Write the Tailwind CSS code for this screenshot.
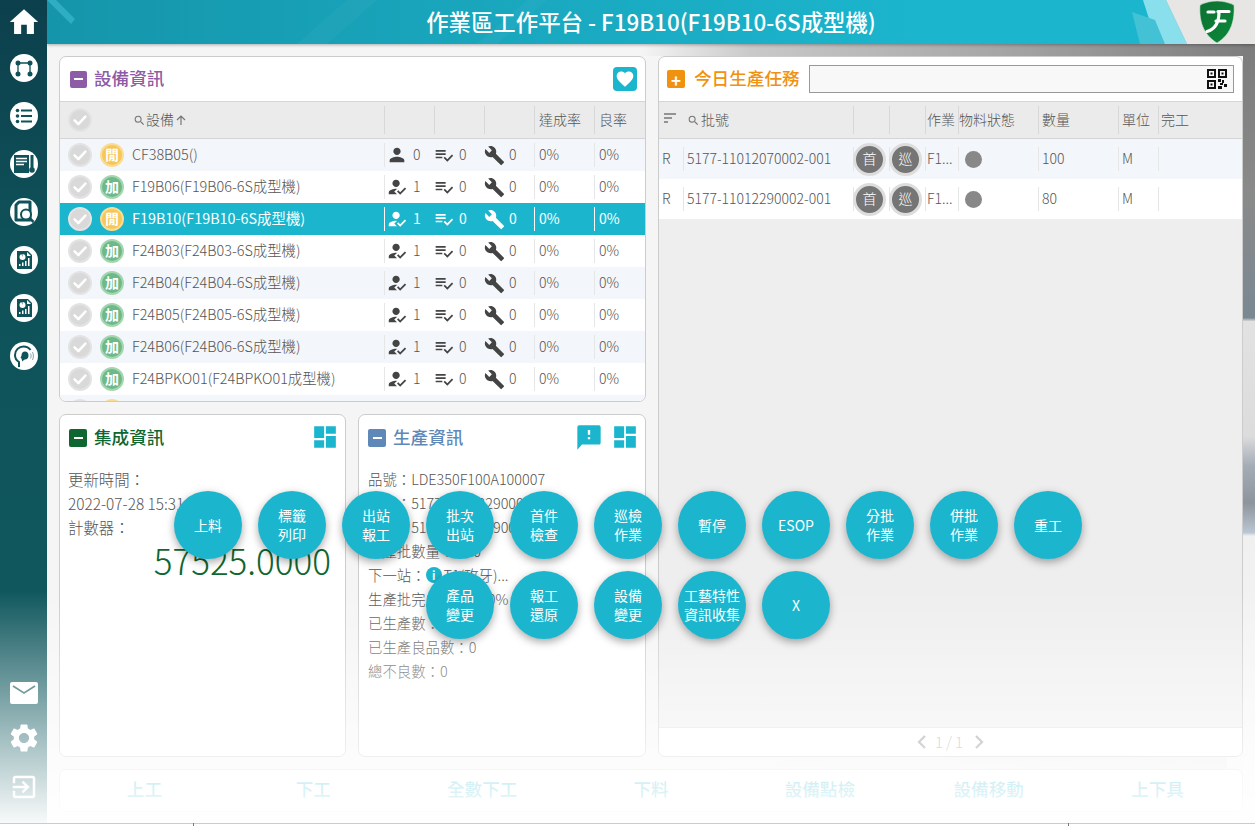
<!DOCTYPE html>
<html lang="zh-Hant"><head><meta charset="utf-8">
<script src="https://cdn.jsdelivr.net/npm/@tailwindcss/browser@4"></script>
</head>
<body class="w-[1255px] h-[826px] overflow-hidden font-['Noto_Sans_CJK_TC','Noto_Sans',sans-serif] font-light text-[#555] bg-[#f5f5f5]">
<svg class="hidden">
<symbol id="person" viewBox="0 0 24 24"><path d="M12 12c2.21 0 4-1.79 4-4s-1.79-4-4-4-4 1.79-4 4 1.79 4 4 4zm0 2c-2.67 0-8 1.34-8 4v2h16v-2c0-2.66-5.33-4-8-4z"/></symbol>
<symbol id="reg" viewBox="0 0 24 24"><path d="M9 17l3-2.94c-.39-.04-.68-.06-1-.06-2.67 0-8 1.34-8 4v2h9l-3-3zm2-5c2.21 0 4-1.79 4-4s-1.79-4-4-4-4 1.79-4 4 1.79 4 4 4zM15.47 20.5L12 17l1.4-1.41 2.07 2.08 5.13-5.17 1.4 1.41z"/></symbol>
<symbol id="plc" viewBox="0 0 24 24"><path d="M14 10H2v2h12v-2zm0-4H2v2h12V6zM2 16h8v-2H2v2zm19.5-4.5L23 13l-6.99 7-4.51-4.5L13 14l3.01 3 5.49-5.5z"/></symbol>
<symbol id="wrench" viewBox="0 0 24 24"><path d="M22.7 19l-9.1-9.1c.9-2.3.4-5-1.5-6.9-2-2-5-2.4-7.4-1.3L9 6 6 9 1.6 4.7C.4 7.1.9 10.1 2.9 12.1c1.9 1.9 4.6 2.4 6.9 1.5l9.1 9.1c.4.4 1 .4 1.4 0l2.3-2.3c.5-.4.5-1.1.1-1.4z"/></symbol>
<symbol id="dash" viewBox="0 0 24 24"><path d="M2 13h9.2V2H2v11zm0 9h9.2v-7H2v7zm10.800 0H22V11h-9.200v11zm0-20v7H22V2h-9.200z"/></symbol>
<symbol id="tick" viewBox="0 0 24 24"><path d="M5.500 12.500l4.500 4.500 8.500-9" fill="none" stroke="#fff" stroke-width="3" stroke-linecap="round" stroke-linejoin="round"/></symbol>
<symbol id="search" viewBox="0 0 24 24"><path d="M15.500 14h-.79l-.28-.27A6.470 6.470 0 0 0 16 9.500 6.500 6.500 0 1 0 9.500 16c1.610 0 3.090-.59 4.230-1.570l.27.28v.79l5 4.990L20.490 19l-4.990-5zm-6 0C7.010 14 5 11.990 5 9.500S7.010 5 9.500 5 14 7.010 14 9.500 11.990 14 9.500 14z"/></symbol>
<symbol id="chart" viewBox="0 0 24 24"><path d="M5 3h11l4 4v14H5z" fill="#0f5259"/><circle cx="10.500" cy="9" r="3" fill="#fff"/><path d="M10.500 9V6h-1z" fill="#0f5259"/><path d="M7 18v-2h1.500v2zM10 18v-3.500h1.500V18zM13 18v-5h1.500v5zM16 18v-8h1.500v8z" fill="#fff"/><path d="M15 4l4 4h-4z" fill="#fff"/></symbol>
</svg>

<div class="flex w-[1255px] h-[826px] relative">
  <!-- backdrop of the page -->
  <div class="absolute left-[640px] right-0 top-[44px] h-[12px] bg-[linear-gradient(90deg,#f5f5f5,#c9c9c9_18%,#a9a9a9_55%,#7c7c7c)]"></div>
  <div class="absolute right-0 w-[12px] top-[44px] h-[740px] bg-[linear-gradient(180deg,#7c7c7c_0%,#8a8a8a_20%,#7a8892_37%,#e2e2e2_37.500%,#dcdcdc_53%,#a4adb6_57%,#8d949c_62%,#b9c6d2_66%,#f0f0f0_66.500%,#f7f7f7_100%)]"></div>
  <div class="absolute left-[658px] right-[28px] top-[757px] h-[12px] bg-[linear-gradient(90deg,#f4f4f4,#ebebeb)]"></div>

  <!-- sidebar -->
  <aside class="relative z-10 w-[47px] shrink-0 h-full flex flex-col items-center bg-[linear-gradient(180deg,#0c3f4c,#0f5259_30%,#0f5a60)]">
    <svg class="w-[34px] h-[34px] mt-[5px]" viewBox="0 0 24 24" fill="#fff"><path d="M10 20.500v-6.500h4v6.500h5v-8.500h3L12 3 2 12h3v8.500z"/></svg>
    <div class="flex flex-col items-center gap-[20px] mt-[15px]">
      <div class="w-[28px] h-[28px] rounded-full bg-white"><svg viewBox="0 0 28 28" class="w-full h-full"><g fill="#0f5259"><circle cx="8" cy="9" r="2.500"/><circle cx="20" cy="9" r="2.500"/><circle cx="8" cy="20" r="2.500"/><circle cx="20" cy="20" r="2.500"/></g><path d="M8 9v11M20 9v11M8 9h12" fill="none" stroke="#0f5259" stroke-width="1.300"/></svg></div>
      <div class="w-[28px] h-[28px] rounded-full bg-white"><svg viewBox="0 0 28 28" class="w-full h-full"><g fill="#0f5259"><circle cx="7.500" cy="8.500" r="1.800"/><circle cx="7.500" cy="14" r="1.800"/><circle cx="7.500" cy="19.500" r="1.800"/><rect x="11" y="7.500" width="11" height="2"/><rect x="11" y="13" width="11" height="2"/><rect x="11" y="18.500" width="11" height="2"/></g></svg></div>
      <div class="w-[28px] h-[28px] rounded-full bg-white"><svg viewBox="0 0 28 28" class="w-full h-full"><rect x="4" y="5" width="15" height="18" fill="#0f5259"/><path d="M6 8.500h11M6 11.500h11M6 14.500h8" stroke="#fff" stroke-width="1.300"/><rect x="20.500" y="5" width="3" height="13" fill="#0f5259"/><circle cx="22" cy="20" r="2.800" fill="#0f5259"/></svg></div>
      <div class="w-[28px] h-[28px] rounded-full bg-white"><svg viewBox="0 0 28 28" class="w-full h-full"><path d="M9 4h11v18H6V7z" fill="none" stroke="#0f5259" stroke-width="3" stroke-linejoin="round"/><circle cx="16" cy="16.500" r="5" fill="#fff" stroke="#0f5259" stroke-width="2"/><path d="M19.500 20l4 4" stroke="#0f5259" stroke-width="2.500"/></svg></div>
      <div class="w-[28px] h-[28px] rounded-full bg-white p-[2px]"><svg class="w-full h-full"><use href="#chart"/></svg></div>
      <div class="w-[28px] h-[28px] rounded-full bg-white p-[2px]"><svg class="w-full h-full"><use href="#chart"/></svg></div>
      <div class="w-[28px] h-[28px] rounded-full bg-white"><svg viewBox="0 0 28 28" class="w-full h-full"><path d="M9 25v-5c-2.500-1.500-4-4-4-7 0-5 4-8.500 8.500-8.500 3 0 5.500 1.300 7 3.500" fill="none" stroke="#0f5259" stroke-width="2"/><path d="M12.500 19.500c-1-2-.5-3-2-4 .5-1 1-1 1-2 0-2.500 1.500-4 3.500-4s3.500 1.500 3.500 4-1.500 4-3.500 4c-1 0-1.500 .8-2.500 2z" fill="#0f5259"/><path d="M20.500 11.500c.8 1.500.8 3.500 0 5M22.500 10c1.200 2.500 1.200 5.500 0 8" stroke="#8aa5a9" stroke-width="1" fill="none"/></svg></div>
    </div>
    <div class="mt-auto flex flex-col items-center gap-[20px] mb-[24px]">
      <svg class="w-[28px] h-[22px]" viewBox="0 0 28 22"><rect width="28" height="22" rx="2" fill="#fff"/><path d="M3 4l11 7 11-7" fill="none" stroke="#0f5259" stroke-width="1.500"/></svg>
      <svg class="w-[34px] h-[34px] -my-[3px]" viewBox="0 0 24 24" fill="#fff"><path d="M19.140,12.940c0.040-0.300,0.060-0.610,0.060-0.940c0-0.320-0.020-0.640-0.070-0.940l2.030-1.580c0.180-0.140,0.230-0.410,0.120-0.610l-1.920-3.320c-0.120-0.220-0.370-0.290-0.590-0.220l-2.390,0.960c-0.500-0.380-1.030-0.700-1.620-0.940L14.400,2.810c-0.040-0.240-0.240-0.410-0.480-0.410h-3.840c-0.240,0-0.430,0.170-0.470,0.410L9.250,5.350C8.660,5.590,8.120,5.920,7.630,6.290L5.240,5.330c-0.220-0.080-0.470,0-0.590,0.220L2.740,8.870C2.620,9.080,2.660,9.340,2.860,9.480l2.030,1.580C4.840,11.360,4.800,11.690,4.800,12s0.020,0.640,0.070,0.940l-2.030,1.580c-0.180,0.140-0.230,0.410-0.120,0.610l1.920,3.320c0.120,0.220,0.370,0.290,0.590,0.220l2.390-0.960c0.500,0.380,1.030,0.700,1.620,0.940l0.360,2.540c0.050,0.240,0.240,0.410,0.480,0.410h3.840c0.240,0,0.440-0.170,0.470-0.410l0.360-2.540c0.590-0.240,1.130-0.560,1.620-0.940l2.390,0.960c0.220,0.080,0.470,0,0.590-0.220l1.920-3.320c0.120-0.220,0.070-0.470-0.120-0.610L19.140,12.940z M12,15.600c-1.980,0-3.600-1.620-3.600-3.600s1.620-3.600,3.600-3.600s3.600,1.620,3.600,3.600S13.980,15.600,12,15.600z"/></svg>
      <svg class="w-[30px] h-[30px]" viewBox="0 0 24 24" fill="#fff"><path d="M10.090 15.590L11.500 17l5-5-5-5-1.410 1.410L12.670 11H3v2h9.670l-2.580 2.590zM19 3H5c-1.110 0-2 .9-2 2v4h2V5h14v14H5v-4H3v4c0 1.100.89 2 2 2h14c1.100 0 2-.9 2-2V5c0-1.100-.9-2-2-2z"/></svg>
    </div>
  </aside>

  <div class="relative w-[1208px] h-full flex flex-col">
    <!-- header -->
    <header class="relative h-[44px] shrink-0 overflow-hidden flex items-center justify-center bg-[linear-gradient(90deg,#1595aa,#19a6bd_35%,#1bb6ce_75%,#1bb6ce)] shadow-[0_1px_3px_rgba(0,0,0,0.3)]">
      <svg class="absolute inset-0 w-[1208px] h-[44px]" viewBox="0 0 1208 44">
        <polygon points="0,0 9,0 28,19 24,24" fill="#45c3d6" opacity="0.55"/>
        <polygon points="300,0 330,0 280,44 250,44" fill="#fff" opacity="0.03"/>
        <polygon points="480,0 500,0 450,44 430,44" fill="#fff" opacity="0.03"/>
        <polygon points="1096,0 1119,0 1140,44 1110,44" fill="#8adfec"/>
        <polygon points="1085,12 1108,20 1118,44 1093,44" fill="#43c2d6"/>
        <polygon points="1119,0 1208,0 1208,44 1140,44" fill="#e8e6e4"/>
      </svg>
      <h1 class="relative text-white text-[22.400px] leading-none font-medium pb-[1px]">作業區工作平台 - F19B10(F19B10-6S成型機)</h1>
      <svg class="absolute right-[19px] top-0 w-[38px] h-[44px]" viewBox="0 0 38 44"><defs><linearGradient id="lg" x1="0" x2="1" y1="0" y2="1"><stop offset="0" stop-color="#0d6f30"/><stop offset="1" stop-color="#0b8a3a"/></linearGradient></defs><path d="M19 1c6 0 12 1.500 17 4 .8 14-2 29-17 38C4 34 1 19 2 5c5-2.500 11-4 17-4z" fill="url(#lg)" stroke="#d5ead9" stroke-width="0.600"/><path d="M10 12h6M20 11.500h11M21 12c0 9-3 17-12 19.500M18 21h9" stroke="#fff" stroke-width="3.200" fill="none" stroke-linecap="round"/></svg>
    </header>

    <!-- content -->
    <main class="flex-1 flex flex-col pt-[12px] px-[12px] gap-[12px]">
      <div class="flex gap-[12px] h-[701px]">
        <div class="w-[587px] flex flex-col gap-[12px]">

          <!-- equipment -->
          <section class="h-[346px] overflow-hidden bg-white border border-[#ccc] rounded-[7px]">
            <div class="h-[44px] flex items-center justify-between pl-[10px] pr-[8px]">
              <div class="flex items-center gap-[7px]"><span class="w-[17px] h-[17px] rounded-[2px] bg-[#8e5ba6] flex items-center justify-center"><span class="w-[9px] h-[2px] bg-white"></span></span><span class="text-[17.600px] font-medium text-[#8e5ba6] leading-none -mt-[2px]">設備資訊</span></div>
              <span class="w-[24px] h-[24px] rounded-[4px] bg-[#1bb6ce] flex items-center justify-center"><svg class="w-[20px] h-[20px]" viewBox="0 0 24 24" fill="#fff"><path d="M12 21.350l-1.450-1.320C5.400 15.360 2 12.280 2 8.500 2 5.420 4.420 3 7.500 3c1.740 0 3.410.81 4.500 2.090C13.090 3.810 14.760 3 16.500 3 19.580 3 22 5.420 22 8.500c0 3.780-3.400 6.860-8.550 11.540L12 21.350z"/></svg></span>
            </div>
            <div class="h-[38px] flex items-center bg-[#ebebeb] border-y border-[#d5d5d5] text-[14px]">
              <div class="w-[324px] flex items-center">
                <span class="ml-[8px] w-[24px] h-[24px] rounded-full bg-[#d9d9d9] border-2 border-[#e3e3e3]"><svg class="w-full h-full"><use href="#tick"/></svg></span>
                <svg class="w-[13px] h-[13px] ml-[41px] fill-[#777]"><use href="#search"/></svg><span class="-mt-[2px]">設備</span>
                <svg class="w-[12px] h-[12px] ml-[1px]" viewBox="0 0 12 12"><path d="M6 11V2M2 6l4-4 4 4" fill="none" stroke="#777" stroke-width="1.200"/></svg>
              </div>
              <div class="w-[50px] h-[28px] border-l border-[#d8d8d8]"></div>
              <div class="w-[50px] h-[28px] border-l border-[#d8d8d8]"></div>
              <div class="w-[50px] h-[28px] border-l border-[#d8d8d8]"></div>
              <div class="w-[60px] h-[28px] border-l border-[#d8d8d8] pl-[4px] leading-[26px]">達成率</div>
              <div class="w-[51px] h-[28px] border-l border-[#d8d8d8] pl-[4px] leading-[26px]">良率</div>
            </div>

            <div class="h-[32px] flex items-center text-[14px] bg-[#f3f6fa]">
              <div class="w-[324px] flex items-center"><span class="ml-[8px] w-[24px] h-[24px] rounded-full bg-[#d9d9d9] border-2 border-[#e3e3e3]"><svg class="w-full h-full"><use href="#tick"/></svg></span><span class="ml-[8px] w-[24px] h-[24px] rounded-full bg-[#f5c75a] border-2 border-[#fbdc94] text-white font-bold text-[14px] leading-[19px] text-center">閒</span><span class="ml-[8px] -mt-[2px] text-[14.400px]">CF38B05()</span></div>
              <div class="w-[50px] h-[24px] border-l border-[#e6e6e6] flex items-center pl-[1px] gap-[5px]"><svg class="w-[22px] h-[22px] fill-[#444]"><use href="#person"/></svg><span class="-mt-[2px]">0</span></div>
              <div class="w-[50px] h-[24px] flex items-center gap-[5px]"><svg class="w-[20px] h-[20px] fill-[#444]"><use href="#plc"/></svg><span class="-mt-[2px]">0</span></div>
              <div class="w-[50px] h-[24px] flex items-center gap-[4px]"><svg class="w-[21px] h-[21px] fill-[#444]"><use href="#wrench"/></svg><span class="-mt-[2px]">0</span></div>
              <div class="w-[60px] h-[24px] border-l border-[#e6e6e6] pl-[4px] leading-[22px]">0%</div>
              <div class="w-[51px] h-[24px] border-l border-[#e6e6e6] pl-[4px] leading-[22px]">0%</div>
            </div>
            <div class="h-[32px] flex items-center text-[14px] bg-white">
              <div class="w-[324px] flex items-center"><span class="ml-[8px] w-[24px] h-[24px] rounded-full bg-[#d9d9d9] border-2 border-[#e3e3e3]"><svg class="w-full h-full"><use href="#tick"/></svg></span><span class="ml-[8px] w-[24px] h-[24px] rounded-full bg-[#6fb986] border-2 border-[#a3d6b2] text-white font-bold text-[14px] leading-[19px] text-center">加</span><span class="ml-[8px] -mt-[2px] text-[14.400px]">F19B06(F19B06-6S成型機)</span></div>
              <div class="w-[50px] h-[24px] border-l border-[#e6e6e6] flex items-center pl-[1px] gap-[5px]"><svg class="w-[22px] h-[22px] fill-[#444]"><use href="#reg"/></svg><span class="-mt-[2px]">1</span></div>
              <div class="w-[50px] h-[24px] flex items-center gap-[5px]"><svg class="w-[20px] h-[20px] fill-[#444]"><use href="#plc"/></svg><span class="-mt-[2px]">0</span></div>
              <div class="w-[50px] h-[24px] flex items-center gap-[4px]"><svg class="w-[21px] h-[21px] fill-[#444]"><use href="#wrench"/></svg><span class="-mt-[2px]">0</span></div>
              <div class="w-[60px] h-[24px] border-l border-[#e6e6e6] pl-[4px] leading-[22px]">0%</div>
              <div class="w-[51px] h-[24px] border-l border-[#e6e6e6] pl-[4px] leading-[22px]">0%</div>
            </div>
            <div class="h-[32px] flex items-center text-[14px] bg-[#1bb6ce] text-white font-normal">
              <div class="w-[324px] flex items-center"><span class="ml-[8px] w-[24px] h-[24px] rounded-full bg-[#d9d9d9] border-2 border-[#e3e3e3]"><svg class="w-full h-full"><use href="#tick"/></svg></span><span class="ml-[8px] w-[24px] h-[24px] rounded-full bg-[#f5c75a] border-2 border-[#fbdc94] text-white font-bold text-[14px] leading-[19px] text-center">閒</span><span class="ml-[8px] -mt-[2px] text-[14.400px]">F19B10(F19B10-6S成型機)</span></div>
              <div class="w-[50px] h-[24px] border-l border-white flex items-center pl-[1px] gap-[5px]"><svg class="w-[22px] h-[22px] fill-white"><use href="#reg"/></svg><span class="-mt-[2px]">1</span></div>
              <div class="w-[50px] h-[24px] flex items-center gap-[5px]"><svg class="w-[20px] h-[20px] fill-white"><use href="#plc"/></svg><span class="-mt-[2px]">0</span></div>
              <div class="w-[50px] h-[24px] flex items-center gap-[4px]"><svg class="w-[21px] h-[21px] fill-white"><use href="#wrench"/></svg><span class="-mt-[2px]">0</span></div>
              <div class="w-[60px] h-[24px] border-l border-white pl-[4px] leading-[22px]">0%</div>
              <div class="w-[51px] h-[24px] border-l border-white pl-[4px] leading-[22px]">0%</div>
            </div>
            <div class="h-[32px] flex items-center text-[14px] bg-white">
              <div class="w-[324px] flex items-center"><span class="ml-[8px] w-[24px] h-[24px] rounded-full bg-[#d9d9d9] border-2 border-[#e3e3e3]"><svg class="w-full h-full"><use href="#tick"/></svg></span><span class="ml-[8px] w-[24px] h-[24px] rounded-full bg-[#6fb986] border-2 border-[#a3d6b2] text-white font-bold text-[14px] leading-[19px] text-center">加</span><span class="ml-[8px] -mt-[2px] text-[14.400px]">F24B03(F24B03-6S成型機)</span></div>
              <div class="w-[50px] h-[24px] border-l border-[#e6e6e6] flex items-center pl-[1px] gap-[5px]"><svg class="w-[22px] h-[22px] fill-[#444]"><use href="#reg"/></svg><span class="-mt-[2px]">1</span></div>
              <div class="w-[50px] h-[24px] flex items-center gap-[5px]"><svg class="w-[20px] h-[20px] fill-[#444]"><use href="#plc"/></svg><span class="-mt-[2px]">0</span></div>
              <div class="w-[50px] h-[24px] flex items-center gap-[4px]"><svg class="w-[21px] h-[21px] fill-[#444]"><use href="#wrench"/></svg><span class="-mt-[2px]">0</span></div>
              <div class="w-[60px] h-[24px] border-l border-[#e6e6e6] pl-[4px] leading-[22px]">0%</div>
              <div class="w-[51px] h-[24px] border-l border-[#e6e6e6] pl-[4px] leading-[22px]">0%</div>
            </div>
            <div class="h-[32px] flex items-center text-[14px] bg-[#f3f6fa]">
              <div class="w-[324px] flex items-center"><span class="ml-[8px] w-[24px] h-[24px] rounded-full bg-[#d9d9d9] border-2 border-[#e3e3e3]"><svg class="w-full h-full"><use href="#tick"/></svg></span><span class="ml-[8px] w-[24px] h-[24px] rounded-full bg-[#6fb986] border-2 border-[#a3d6b2] text-white font-bold text-[14px] leading-[19px] text-center">加</span><span class="ml-[8px] -mt-[2px] text-[14.400px]">F24B04(F24B04-6S成型機)</span></div>
              <div class="w-[50px] h-[24px] border-l border-[#e6e6e6] flex items-center pl-[1px] gap-[5px]"><svg class="w-[22px] h-[22px] fill-[#444]"><use href="#reg"/></svg><span class="-mt-[2px]">1</span></div>
              <div class="w-[50px] h-[24px] flex items-center gap-[5px]"><svg class="w-[20px] h-[20px] fill-[#444]"><use href="#plc"/></svg><span class="-mt-[2px]">0</span></div>
              <div class="w-[50px] h-[24px] flex items-center gap-[4px]"><svg class="w-[21px] h-[21px] fill-[#444]"><use href="#wrench"/></svg><span class="-mt-[2px]">0</span></div>
              <div class="w-[60px] h-[24px] border-l border-[#e6e6e6] pl-[4px] leading-[22px]">0%</div>
              <div class="w-[51px] h-[24px] border-l border-[#e6e6e6] pl-[4px] leading-[22px]">0%</div>
            </div>
            <div class="h-[32px] flex items-center text-[14px] bg-white">
              <div class="w-[324px] flex items-center"><span class="ml-[8px] w-[24px] h-[24px] rounded-full bg-[#d9d9d9] border-2 border-[#e3e3e3]"><svg class="w-full h-full"><use href="#tick"/></svg></span><span class="ml-[8px] w-[24px] h-[24px] rounded-full bg-[#6fb986] border-2 border-[#a3d6b2] text-white font-bold text-[14px] leading-[19px] text-center">加</span><span class="ml-[8px] -mt-[2px] text-[14.400px]">F24B05(F24B05-6S成型機)</span></div>
              <div class="w-[50px] h-[24px] border-l border-[#e6e6e6] flex items-center pl-[1px] gap-[5px]"><svg class="w-[22px] h-[22px] fill-[#444]"><use href="#reg"/></svg><span class="-mt-[2px]">1</span></div>
              <div class="w-[50px] h-[24px] flex items-center gap-[5px]"><svg class="w-[20px] h-[20px] fill-[#444]"><use href="#plc"/></svg><span class="-mt-[2px]">0</span></div>
              <div class="w-[50px] h-[24px] flex items-center gap-[4px]"><svg class="w-[21px] h-[21px] fill-[#444]"><use href="#wrench"/></svg><span class="-mt-[2px]">0</span></div>
              <div class="w-[60px] h-[24px] border-l border-[#e6e6e6] pl-[4px] leading-[22px]">0%</div>
              <div class="w-[51px] h-[24px] border-l border-[#e6e6e6] pl-[4px] leading-[22px]">0%</div>
            </div>
            <div class="h-[32px] flex items-center text-[14px] bg-[#f3f6fa]">
              <div class="w-[324px] flex items-center"><span class="ml-[8px] w-[24px] h-[24px] rounded-full bg-[#d9d9d9] border-2 border-[#e3e3e3]"><svg class="w-full h-full"><use href="#tick"/></svg></span><span class="ml-[8px] w-[24px] h-[24px] rounded-full bg-[#6fb986] border-2 border-[#a3d6b2] text-white font-bold text-[14px] leading-[19px] text-center">加</span><span class="ml-[8px] -mt-[2px] text-[14.400px]">F24B06(F24B06-6S成型機)</span></div>
              <div class="w-[50px] h-[24px] border-l border-[#e6e6e6] flex items-center pl-[1px] gap-[5px]"><svg class="w-[22px] h-[22px] fill-[#444]"><use href="#reg"/></svg><span class="-mt-[2px]">1</span></div>
              <div class="w-[50px] h-[24px] flex items-center gap-[5px]"><svg class="w-[20px] h-[20px] fill-[#444]"><use href="#plc"/></svg><span class="-mt-[2px]">0</span></div>
              <div class="w-[50px] h-[24px] flex items-center gap-[4px]"><svg class="w-[21px] h-[21px] fill-[#444]"><use href="#wrench"/></svg><span class="-mt-[2px]">0</span></div>
              <div class="w-[60px] h-[24px] border-l border-[#e6e6e6] pl-[4px] leading-[22px]">0%</div>
              <div class="w-[51px] h-[24px] border-l border-[#e6e6e6] pl-[4px] leading-[22px]">0%</div>
            </div>
            <div class="h-[32px] flex items-center text-[14px] bg-white">
              <div class="w-[324px] flex items-center"><span class="ml-[8px] w-[24px] h-[24px] rounded-full bg-[#d9d9d9] border-2 border-[#e3e3e3]"><svg class="w-full h-full"><use href="#tick"/></svg></span><span class="ml-[8px] w-[24px] h-[24px] rounded-full bg-[#6fb986] border-2 border-[#a3d6b2] text-white font-bold text-[14px] leading-[19px] text-center">加</span><span class="ml-[8px] -mt-[2px] text-[14.400px]">F24BPKO01(F24BPKO01成型機)</span></div>
              <div class="w-[50px] h-[24px] border-l border-[#e6e6e6] flex items-center pl-[1px] gap-[5px]"><svg class="w-[22px] h-[22px] fill-[#444]"><use href="#reg"/></svg><span class="-mt-[2px]">1</span></div>
              <div class="w-[50px] h-[24px] flex items-center gap-[5px]"><svg class="w-[20px] h-[20px] fill-[#444]"><use href="#plc"/></svg><span class="-mt-[2px]">0</span></div>
              <div class="w-[50px] h-[24px] flex items-center gap-[4px]"><svg class="w-[21px] h-[21px] fill-[#444]"><use href="#wrench"/></svg><span class="-mt-[2px]">0</span></div>
              <div class="w-[60px] h-[24px] border-l border-[#e6e6e6] pl-[4px] leading-[22px]">0%</div>
              <div class="w-[51px] h-[24px] border-l border-[#e6e6e6] pl-[4px] leading-[22px]">0%</div>
            </div>
            <div class="h-[32px] flex items-center bg-[#f3f6fa]"><span class="ml-[8px] w-[24px] h-[24px] rounded-full bg-[#d9d9d9] border-2 border-[#e3e3e3]"></span><span class="ml-[8px] w-[24px] h-[24px] rounded-full bg-[#f5c75a] border-2 border-[#fbdc94]"></span></div>
          </section>

          <div class="flex gap-[12px] h-[343px]">
            <!-- integration -->
            <section class="w-[287px] bg-white border border-[#ccc] rounded-[7px] px-[9px]">
              <div class="h-[45px] flex items-center justify-between">
                <div class="flex items-center gap-[7px]"><span class="w-[18px] h-[18px] rounded-[2px] bg-[#0f6630] flex items-center justify-center"><span class="w-[9px] h-[2px] bg-white"></span></span><span class="text-[17.600px] font-medium text-[#0f6630] leading-none -mt-[2px]">集成資訊</span></div>
                <svg class="w-[26px] h-[26px] fill-[#1bb6ce] -mr-[2px] -mt-[2px]"><use href="#dash"/></svg>
              </div>
              <div class="mt-[7px] -ml-[1px] text-[15.400px] leading-[24px]">
                <p>更新時間：</p>
                <p>2022-07-28 15:31:20</p>
                <p>計數器：</p>
              </div>
              <p class="text-right pr-[5px] text-[35px] font-light leading-[42px] text-[#0f6630]">57525.0000</p>
            </section>
            <!-- production -->
            <section class="w-[288px] bg-white border border-[#ccc] rounded-[7px] px-[9px]">
              <div class="h-[45px] flex items-center justify-between">
                <div class="flex items-center gap-[7px]"><span class="w-[18px] h-[18px] rounded-[2px] bg-[#5f88b8] flex items-center justify-center"><span class="w-[9px] h-[2px] bg-white"></span></span><span class="text-[17.600px] font-medium text-[#5f88b8] leading-none -mt-[2px]">生產資訊</span></div>
                <div class="flex items-center gap-[9px] -mr-[2px] -mt-[2px]"><svg class="w-[28px] h-[28px] fill-[#1bb6ce]" viewBox="0 0 24 24"><path d="M20.500 2H3.500c-1.100 0-1.500.9-1.500 2L2 23l4-4.500h14.500c1.100 0 1.500-.9 1.500-2V4c0-1.100-.4-2-1.500-2zM13 14h-2v-2h2v2zm0-4h-2V6h2v4z"/></svg><svg class="w-[26px] h-[26px] fill-[#1bb6ce]"><use href="#dash"/></svg></div>
              </div>
              <div class="mt-[7px] text-[14.400px] leading-[24px]">
                <p>品號：LDE350F100A100007</p>
                <p>批號：5177-11012290002-001</p>
                <p>工單：5177-11012290002</p>
                <p>生產批數量：80.0</p>
                <p class="flex items-center">下一站：<span class="w-[16px] h-[16px] rounded-full bg-[#1bb6ce] text-white text-[11px] font-bold text-center leading-[16px] mr-[2px]">i</span>T1(攻牙)...</p>
                <p>生產批完成率：0.00%</p>
                <p>已生產數：0</p>
                <p>已生產良品數：0</p>
                <p>總不良數：0</p>
              </div>
            </section>
          </div>
        </div>

        <!-- today's tasks -->
        <section class="w-[585px] bg-white border border-[#ccc] rounded-[7px] overflow-hidden flex flex-col">
          <div class="h-[44px] shrink-0 flex items-center pl-[8px] pr-[8px]">
            <span class="w-[18px] h-[18px] rounded-[2px] bg-[#f0920f] flex items-center justify-center text-white font-bold text-[17px] leading-none">+</span>
            <span class="ml-[9px] text-[17.600px] font-medium text-[#f0920f] leading-none -mt-[2px]">今日生產任務</span>
            <div class="ml-[9px] flex-1 h-[28px] bg-[#f8f8f8] border border-[#999] flex items-center justify-end pr-[6px]">
              <svg class="w-[20px] h-[20px]" viewBox="0 0 20 20"><g fill="none" stroke="#111" stroke-width="2"><rect x="1" y="1" width="7" height="7"/><rect x="12" y="1" width="7" height="7"/><rect x="1" y="12" width="7" height="7"/></g><g fill="#111"><rect x="3.500" y="3.500" width="2" height="2"/><rect x="14.500" y="3.500" width="2" height="2"/><rect x="3.500" y="14.500" width="2" height="2"/><rect x="11" y="10" width="3" height="3"/><rect x="15" y="11" width="2" height="3"/><rect x="13" y="14" width="3" height="2"/><rect x="17" y="15" width="3" height="3"/><rect x="11" y="17" width="4" height="3"/></g></svg>
            </div>
          </div>
          <div class="h-[38px] shrink-0 flex items-center bg-[#ebebeb] border-y border-[#d5d5d5] text-[14px]">
            <div class="w-[194px] flex items-center">
              <svg class="w-[14px] h-[14px] ml-[4px] -mt-[4px]" viewBox="0 0 14 14"><path d="M1 3h12M1 7h8M1 11h4" stroke="#777" stroke-width="1.300"/></svg>
              <svg class="w-[13px] h-[13px] ml-[10px] mr-[1px] fill-[#777]"><use href="#search"/></svg><span class="-mt-[2px]">批號</span>
            </div>
            <div class="w-[36px] h-[28px] border-l border-[#d8d8d8]"></div>
            <div class="w-[36px] h-[28px] border-l border-[#d8d8d8]"></div>
            <div class="w-[33px] h-[28px] border-l border-[#d8d8d8] pl-[1px] leading-[26px] overflow-hidden whitespace-nowrap">作業</div>
            <div class="w-[80px] h-[28px] border-l border-[#d8d8d8] leading-[26px]">物料狀態</div>
            <div class="w-[80px] h-[28px] border-l border-[#d8d8d8] pl-[3px] leading-[26px]">數量</div>
            <div class="w-[40px] h-[28px] border-l border-[#d8d8d8] pl-[3px] leading-[26px]">單位</div>
            <div class="flex-1 h-[28px] border-l border-[#d8d8d8] pl-[2px] leading-[26px]">完工</div>
          </div>
          <div class="h-[40px] shrink-0 flex items-center bg-[#f3f6fa] text-[14px]">
            <div class="w-[24px] h-[24px] pl-[3px] leading-[23px]">R</div>
            <div class="w-[170px] h-[24px] border-l border-[#e6e6e6] pl-[3px] leading-[23px]">5177-11012070002-001</div>
            <div class="w-[36px] h-[24px] border-l border-[#e6e6e6] flex items-center"><span class="shrink-0 -ml-[1px] w-[33px] h-[33px] rounded-full bg-[#757575] border-[3px] border-[#ddd] text-white text-center leading-[25px]">首</span></div>
            <div class="w-[36px] h-[24px] border-l border-[#e6e6e6] flex items-center"><span class="shrink-0 -ml-[1px] w-[33px] h-[33px] rounded-full bg-[#757575] border-[3px] border-[#ddd] text-white text-center leading-[25px]">巡</span></div>
            <div class="w-[33px] h-[24px] border-l border-[#e6e6e6] pl-[1px] leading-[23px]">F1...</div>
            <div class="w-[80px] h-[24px] border-l border-[#e6e6e6] flex items-center pl-[6px]"><span class="w-[17px] h-[17px] rounded-full bg-[#888]"></span></div>
            <div class="w-[80px] h-[24px] border-l border-[#e6e6e6] pl-[3px] leading-[23px]">100</div>
            <div class="w-[40px] h-[24px] border-l border-[#e6e6e6] pl-[3px] leading-[23px]">M</div>
            <div class="flex-1 h-[24px] border-l border-[#e6e6e6]"></div>
          </div>
          <div class="h-[40px] shrink-0 flex items-center bg-white text-[14px]">
            <div class="w-[24px] h-[24px] pl-[3px] leading-[23px]">R</div>
            <div class="w-[170px] h-[24px] border-l border-[#e6e6e6] pl-[3px] leading-[23px]">5177-11012290002-001</div>
            <div class="w-[36px] h-[24px] border-l border-[#e6e6e6] flex items-center"><span class="shrink-0 -ml-[1px] w-[33px] h-[33px] rounded-full bg-[#757575] border-[3px] border-[#ddd] text-white text-center leading-[25px]">首</span></div>
            <div class="w-[36px] h-[24px] border-l border-[#e6e6e6] flex items-center"><span class="shrink-0 -ml-[1px] w-[33px] h-[33px] rounded-full bg-[#757575] border-[3px] border-[#ddd] text-white text-center leading-[25px]">巡</span></div>
            <div class="w-[33px] h-[24px] border-l border-[#e6e6e6] pl-[1px] leading-[23px]">F1...</div>
            <div class="w-[80px] h-[24px] border-l border-[#e6e6e6] flex items-center pl-[6px]"><span class="w-[17px] h-[17px] rounded-full bg-[#888]"></span></div>
            <div class="w-[80px] h-[24px] border-l border-[#e6e6e6] pl-[3px] leading-[23px]">80</div>
            <div class="w-[40px] h-[24px] border-l border-[#e6e6e6] pl-[3px] leading-[23px]">M</div>
            <div class="flex-1 h-[24px] border-l border-[#e6e6e6]"></div>
          </div>
          <div class="flex-1 bg-[#eeeeee]"></div>
          <div class="h-[29px] shrink-0 border-t border-[#ddd] flex items-center justify-center gap-[5px] text-[15px] text-[#999]">
            <svg class="w-[16px] h-[16px]" viewBox="0 0 16 16"><path d="M11 2L5 8l6 6" fill="none" stroke="#888" stroke-width="2.200"/></svg><span class="tracking-[3px]">1/1</span><svg class="w-[16px] h-[16px]" viewBox="0 0 16 16"><path d="M5 2l6 6-6 6" fill="none" stroke="#888" stroke-width="2.200"/></svg>
          </div>
        </section>
      </div>

      <!-- bottom actions -->
      <div class="w-[1184px] h-[43px] pb-[2px] bg-white border border-[#ddd] rounded-[7px] grid grid-cols-7 items-center text-center text-[17.600px] font-medium text-[#1bb6ce]">
        <span>上工</span><span>下工</span><span>全數下工</span><span>下料</span><span>設備點檢</span><span>設備移動</span><span>上下具</span>
      </div>
    </main>
  </div>

  <!-- white fade over the page foot -->
  <div class="absolute left-0 top-[590px] w-[1255px] h-[233px] z-20 pointer-events-none bg-[linear-gradient(180deg,rgba(255,255,255,0),rgba(255,255,255,0.97))]"></div>
  <div class="absolute left-0 top-[823px] w-[1255px] h-[3px] z-20 bg-white border-t border-[#ccc]"></div>
  <div class="absolute left-[193px] top-[823px] w-px h-[3px] z-20 bg-[#777]"></div>
  <div class="absolute left-[1068px] top-[823px] w-px h-[3px] z-20 bg-[#777]"></div>

  <!-- floating action menu -->
  <div class="absolute z-30 left-[174px] top-[491px] flex flex-col gap-[12px] text-white font-normal text-[14px] leading-[19px] text-center">
    <div class="flex gap-[16px]">
      <button class="w-[68px] h-[68px] rounded-full bg-[#1bb6ce] shadow-[0_3px_8px_rgba(0,0,0,0.35)]">上料</button>
      <button class="w-[68px] h-[68px] rounded-full bg-[#1bb6ce] shadow-[0_3px_8px_rgba(0,0,0,0.35)]">標籤<br>列印</button>
      <button class="w-[68px] h-[68px] rounded-full bg-[#1bb6ce] shadow-[0_3px_8px_rgba(0,0,0,0.35)]">出站<br>報工</button>
      <button class="w-[68px] h-[68px] rounded-full bg-[#1bb6ce] shadow-[0_3px_8px_rgba(0,0,0,0.35)]">批次<br>出站</button>
      <button class="w-[68px] h-[68px] rounded-full bg-[#1bb6ce] shadow-[0_3px_8px_rgba(0,0,0,0.35)]">首件<br>檢查</button>
      <button class="w-[68px] h-[68px] rounded-full bg-[#1bb6ce] shadow-[0_3px_8px_rgba(0,0,0,0.35)]">巡檢<br>作業</button>
      <button class="w-[68px] h-[68px] rounded-full bg-[#1bb6ce] shadow-[0_3px_8px_rgba(0,0,0,0.35)]">暫停</button>
      <button class="w-[68px] h-[68px] rounded-full bg-[#1bb6ce] shadow-[0_3px_8px_rgba(0,0,0,0.35)]">ESOP</button>
      <button class="w-[68px] h-[68px] rounded-full bg-[#1bb6ce] shadow-[0_3px_8px_rgba(0,0,0,0.35)]">分批<br>作業</button>
      <button class="w-[68px] h-[68px] rounded-full bg-[#1bb6ce] shadow-[0_3px_8px_rgba(0,0,0,0.35)]">併批<br>作業</button>
      <button class="w-[68px] h-[68px] rounded-full bg-[#1bb6ce] shadow-[0_3px_8px_rgba(0,0,0,0.35)]">重工</button>
    </div>
    <div class="flex gap-[16px] ml-[252px]">
      <button class="w-[68px] h-[68px] rounded-full bg-[#1bb6ce] shadow-[0_3px_8px_rgba(0,0,0,0.35)]">產品<br>變更</button>
      <button class="w-[68px] h-[68px] rounded-full bg-[#1bb6ce] shadow-[0_3px_8px_rgba(0,0,0,0.35)]">報工<br>還原</button>
      <button class="w-[68px] h-[68px] rounded-full bg-[#1bb6ce] shadow-[0_3px_8px_rgba(0,0,0,0.35)]">設備<br>變更</button>
      <button class="w-[68px] h-[68px] rounded-full bg-[#1bb6ce] shadow-[0_3px_8px_rgba(0,0,0,0.35)]">工藝特性<br>資訊收集</button>
      <button class="w-[68px] h-[68px] rounded-full bg-[#1bb6ce] shadow-[0_3px_8px_rgba(0,0,0,0.35)]">X</button>
    </div>
  </div>
</div>
</body></html>
